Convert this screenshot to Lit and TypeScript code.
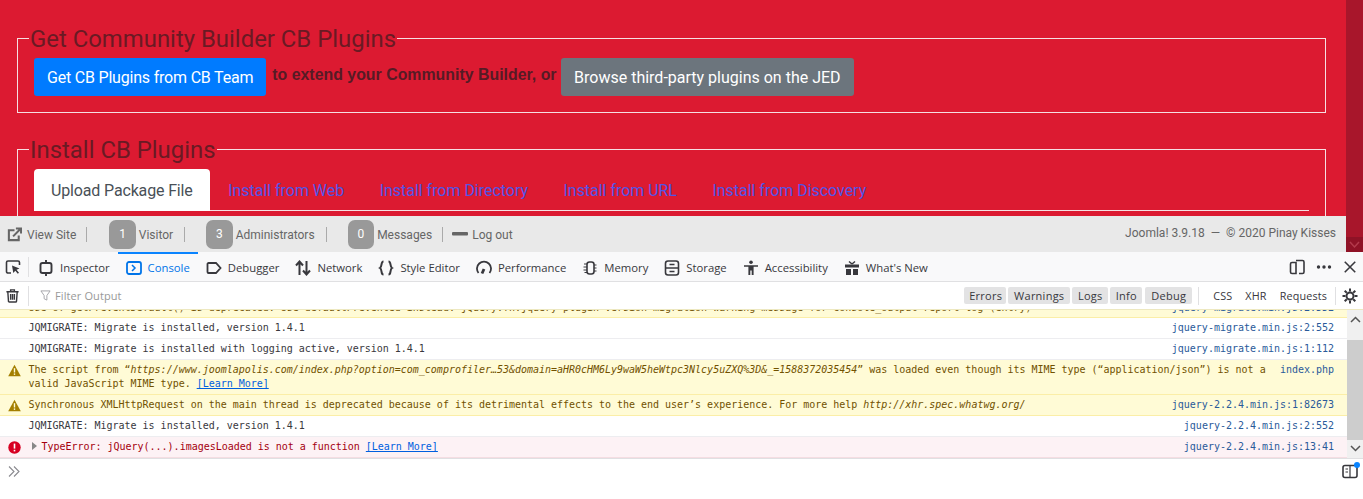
import { LitElement, html, css, svg } from "lit";
import { customElement } from "lit/decorators.js";

const ic = (body: unknown, size = 16, cls = "") =>
  html`<svg class=${cls} width=${size} height=${size} viewBox="0 0 16 16" fill="none" stroke="#38383d" stroke-width="1.6">${body}</svg>`;

const tabs = [
  { t: "Inspector", i: svg`<rect x="2.500" y="3" width="11" height="10" rx="2" stroke-width="1.900"/><path d="M8 0v3M8 13v3" stroke-width="1.900"/>` },
  { t: "Console", on: true, i: svg`<rect x="1" y="2" width="14" height="12" rx="2" stroke="#0074e8" stroke-width="1.800"/><path d="M6 5l3 3-3 3" stroke="#0074e8" stroke-width="1.500"/>` },
  { t: "Debugger", i: svg`<path d="M2.500 3h7.500l4.500 5-4.500 5H2.500a1 1 0 0 1-1-1V4a1 1 0 0 1 1-1z" stroke-width="1.800"/>` },
  { t: "Network", i: svg`<path d="M4.500 15V2M1 5.500L4.500 1.500 8 5.500M11.500 1v13M8 10.500l3.500 4 3.500-4" stroke-width="2"/>` },
  { t: "Style Editor", i: svg`<path d="M5.500 1.500c-3 0-1 5-3.500 6.500c2.500 1.500 0.500 6.500 3.500 6.500M10.500 1.500c3 0 1 5 3.500 6.500c-2.500 1.500-0.500 6.500-3.500 6.500" stroke-width="2"/>` },
  { t: "Performance", i: svg`<path d="M2.500 13a7 7 0 1 1 11 0" stroke-width="1.800"/><path d="M6 13.500l2-4.500" stroke-width="2.800"/>` },
  { t: "Memory", i: svg`<rect x="5" y="2" width="7" height="12" rx="2.500"/><path d="M5 4H2M5 7H1.500M5 10H1.500M5 12.500H2.500M12 5h2.500M12 8h2.500M12 11h2.500" stroke-width="1"/>` },
  { t: "Storage", i: svg`<rect x="1.500" y="1" width="13" height="14" rx="2.500"/><path d="M1.500 8h13M5.500 4.500h5M5.500 11.500h5" stroke-width="1.300"/>` },
  { t: "Accessibility", i: svg`<circle cx="8" cy="2.200" r="1.800" fill="#38383d" stroke="none"/><path d="M1 5.200h14v1.600h-4.400V15H8.700v-4.500H7.300V15H5.400V6.800H1z" fill="#38383d" stroke="none"/>` },
  { t: "What's New", i: svg`<path d="M1 4.500h14v3H1zM2 9h5v6H2zM9 9h5v6H9z" fill="#38383d" stroke="none"/><path d="M8 4L5 1.500M8 4l3-2.500" stroke-width="1.500"/>` },
];

const warnIcon = html`<svg class="licon" width="13" height="13" viewBox="0 0 13 13"><path d="M6.500 0.800L12.800 12.200H0.200z" fill="#a47f00"/><rect x="5.800" y="4.200" width="1.400" height="4.300" fill="#fffbd6"/><rect x="5.800" y="9.400" width="1.400" height="1.500" fill="#fffbd6"/></svg>`;
const errIcon = html`<svg class="licon" width="13" height="13" viewBox="0 0 13 13"><circle cx="6.500" cy="6.500" r="6.200" fill="#d70022"/><rect x="5.700" y="2.600" width="1.600" height="5" fill="#fff"/><rect x="5.700" y="8.800" width="1.600" height="1.600" fill="#fff"/></svg>`;

@customElement("app-root")
export class AppRoot extends LitElement {
  static styles = css`
    :host { display: block; width: 1363px; height: 499px; overflow: hidden; background: #fff; font-family: "Roboto", sans-serif; }
    .page { display: flex; height: 252px; }
    .main { flex: 1; min-width: 0; display: flex; flex-direction: column; }
    .red { height: 216px; overflow: hidden; background: #dc1a31; padding: 23px 20px 0 17px; box-sizing: border-box; color: #6a1a24; }
    fieldset { margin: 0 0 21px; border: 1px solid #f6dfe2; padding: 5px 16px 16px; min-width: 0; }
    legend { font-size: 23.900px; line-height: 28px; padding: 2px 1px 0; margin-left: -5px; }
    .cta { display: flex; align-items: center; gap: 5px; }
    .cta b { font: 900 15.900px/1 "Liberation Sans", sans-serif; margin: -4px 0 0 1px; color: #561b25; }
    .btn { height: 38px; display: flex; align-items: center; padding: 0 13px; border-radius: 3px; color: #fff; font-size: 16px; box-sizing: border-box; white-space: nowrap; }
    .blue { background: #007bff; letter-spacing: -.2px; }
    .grey { background: #6c757d; margin-left: -.500px; }
    .nav { display: flex; gap: 1.500px; border-bottom: 1px solid #f6dfe2; height: 41px; }
    .nav span { padding: 0 17px; height: 41px; line-height: 43px; font-size: 16px; color: #5255e6; white-space: nowrap; letter-spacing: -.03px; }
    .nav .act { background: #fff; color: #495057; border-radius: 4px 4px 0 0; height: 42px; letter-spacing: -.15px; }
    .bar { height: 36px; background: #e9e9e9; display: flex; align-items: center; color: #666; font-size: 12px; padding: 0 10px 0 7px; }
    .bar .it { display: flex; align-items: center; white-space: nowrap; }
    .tx { padding-top: 2px; }
    .sepb { width: 1px; height: 15px; background: #aaa; }
    .badge { width: 26.500px; height: 29px; border-radius: 7px; background: #999; color: #fff; display: flex; align-items: center; justify-content: center; margin-right: 3px; }
    .right { margin-left: auto; padding-bottom: 3px; }
    .sb { width: 17px; background: #a8162b; display: flex; flex-direction: column; justify-content: flex-end; }
    .sb div { height: 15px; background: #8f1226; display: flex; align-items: center; justify-content: center; }
    .tools { height: 30px; box-sizing: border-box; background: #f9f9fa; border-bottom: 1px solid #e0e0e2; display: flex; align-items: center; font: 11.300px "Open Sans", sans-serif; color: #38383d; }
    .tab { height: 29px; display: flex; align-items: center; gap: 6px; padding: 0 8px; box-sizing: border-box; border-top: 2px solid transparent; white-space: nowrap; }
    .tab.on { border-top-color: #0a84ff; color: #0074e8; }
    .tabs { display: flex; margin-left: 1px; }
    .pick { margin-left: 5px; margin-right: 7px; }
    .vsep { width: 1px; height: 20px; background: #e0e0e2; }
    .tr { margin-left: auto; display: flex; align-items: center; gap: 11px; padding-right: 6px; }
    .filter { height: 28px; box-sizing: border-box; display: flex; align-items: center; font: 11px "Open Sans", sans-serif; color: #38383d; border-bottom: 1px solid #ede8c0; letter-spacing: .25px; white-space: nowrap; }
    .ph { color: #999; margin-left: 4px; letter-spacing: .1px; }
    .chips { margin-left: auto; display: flex; gap: 2px; align-items: center; }
    .chip { height: 17px; line-height: 17px; padding: 0 5px; background: #e3e3e4; border-radius: 2px; box-sizing: border-box; text-align: center; }
    .links { display: flex; gap: 13px; margin: 0 8px 0 14px; font-size: 10.800px; letter-spacing: .15px; }
    .console { height: 148px; display: flex; font: 10px/14px "DejaVu Sans Mono", monospace; letter-spacing: -.015px; color: #38383d; }
    .rows { flex: 1; min-width: 0; }
    .row { display: flex; position: relative; box-sizing: border-box; padding: 3px 13px 0 28.500px; border-bottom: 1px solid #ededf0; gap: 5px; }
    .row .msg { flex: 1; min-width: 0; }
    .warn { background: #fffbd6; border-bottom-color: #fbeea7; color: #715100; }
    .err { background: #fdf2f5; border-bottom-color: #f5dde2; color: #a4000f; }
    .src { color: #2a5a9a; white-space: nowrap; text-decoration: none; }
    .licon { position: absolute; left: 7.500px; top: 4px; }
    a { color: #0060df; text-decoration: underline; }
    i { font-style: italic; }
    .tri { display: inline-block; width: 0; height: 0; border-left: 5px solid #888; border-top: 4px solid transparent; border-bottom: 4px solid transparent; margin: 0 5px 0 3px; }
    .cut { height: 8px; overflow: hidden; padding-top: 0; position: relative; }
    .cut .msg, .cut .src { margin-top: -9px; }
    .csb { width: 16px; background: #f0f0f0; display: flex; flex-direction: column; align-items: center; justify-content: space-between; padding: 6px 0; box-sizing: border-box; position: relative; }
    .thumb { position: absolute; left: 0; right: 0; top: 30px; height: 100px; background: #cdcdcd; }
    .input { height: 25px; display: flex; align-items: center; justify-content: space-between; padding: 0 5px 0 8px; border-top: 1px solid #e0e0e2; box-sizing: border-box; position: relative; }
    .dot { position: absolute; right: 3px; top: 3px; width: 6px; height: 6px; background: #0a84ff; border-radius: 50%; }
  `;

  render() {
    return html`
      <div class="page">
        <div class="main">
          <div class="red">
            <fieldset>
              <legend>Get Community Builder CB Plugins</legend>
              <div class="cta">
                <span class="btn blue">Get CB Plugins from CB Team</span>
                <b>to extend your Community Builder, or</b>
                <span class="btn grey">Browse third-party plugins on the JED</span>
              </div>
            </fieldset>
            <fieldset>
              <legend>Install CB Plugins</legend>
              <div class="nav">
                <span class="act">Upload Package File</span>
                <span>Install from Web</span>
                <span>Install from Directory</span>
                <span>Install from URL</span>
                <span>Install from Discovery</span>
              </div>
            </fieldset>
          </div>
          <div class="bar">
            <span class="it"><svg width="15" height="15" viewBox="0 0 16 16" fill="none" stroke="#666" stroke-width="2.200" style="margin-right:5px"><path d="M8 3.500H2v10.500h10.500V9"/><path d="M6.500 10L14 2.500M9.500 1.500H15V7"/></svg><span class="tx">View Site</span></span>
            <span class="sepb" style="margin:0 22px 0 10px"></span>
            <span class="it"><span class="badge">1</span><span class="tx">Visitor</span></span>
            <span class="sepb" style="margin:0 21px 0 11px"></span>
            <span class="it"><span class="badge">3</span><span class="tx">Administrators</span></span>
            <span class="sepb" style="margin:0 21px 0 11px"></span>
            <span class="it"><span class="badge">0</span><span class="tx">Messages</span></span>
            <span class="sepb" style="margin:0 9px 0 10px"></span>
            <span class="it"><svg width="16" height="6" viewBox="0 0 16 6" style="margin-right:4px"><rect y="1" width="16" height="3.500" rx="1" fill="#666"/></svg><span class="tx">Log out</span></span>
            <span class="it right">Joomla! 3.9.18 &nbsp;—&nbsp; © 2020 Pinay Kisses</span>
          </div>
        </div>
        <div class="sb"><div><svg width="11" height="8" viewBox="0 0 11 8" fill="none" stroke="#b33a4c" stroke-width="1.500"><path d="M1 1l4.500 5L10 1"/></svg></div></div>
      </div>

      <div class="tools">
        ${ic(svg`<path d="M6 14H3a1.500 1.500 0 0 1-1.500-1.500v-9A1.500 1.500 0 0 1 3 2h10a1.500 1.500 0 0 1 1.500 1.500V6"/><path d="M7 6.500l7.500 3-3 1.200 2.500 3-1.200 1-2.500-3-2 2.300z" fill="#38383d" stroke="none"/>`, 16, "pick")}
        <span class="vsep"></span>
        <div class="tabs">
          ${tabs.map((t) => html`<div class="tab ${t.on ? "on" : ""}">${ic(t.i, 16)}${t.t}</div>`)}
        </div>
        <div class="tr">
          ${ic(svg`<path d="M7 3.500H3a1.500 1.500 0 0 0-1.500 1.500v8A1.500 1.500 0 0 0 3 14.500h4zM7 1.500h6.500A1.500 1.500 0 0 1 15 3v10a1.500 1.500 0 0 1-1.500 1.500H10"/>`, 16)}
          ${ic(svg`<circle cx="2.500" cy="8" r="1.700" fill="#38383d" stroke="none"/><circle cx="8" cy="8" r="1.700" fill="#38383d" stroke="none"/><circle cx="13.500" cy="8" r="1.700" fill="#38383d" stroke="none"/>`, 16)}
          ${ic(svg`<path d="M2 2l12 12M14 2L2 14" stroke-width="1.800"/>`, 14)}
        </div>
      </div>

      <div class="filter">
        ${ic(svg`<path d="M1.500 4h13M6 4V2h4v2M3 4l.7 10a1 1 0 0 0 1 1h6.600a1 1 0 0 0 1-1L13 4M6 6.500v6M8 6.500v6M10 6.500v6" stroke-width="1.500"/>`, 15, "pick")}
        <span class="vsep" style="margin-left:1px;margin-right:11px"></span>
        <svg width="11" height="11" viewBox="0 0 12 12" fill="none" stroke="#a0a0a5"><path d="M1 1h10L7.500 6v5l-3-1.500V6z"/></svg>
        <span class="ph">Filter Output</span>
        <div class="chips">
          <span class="chip" style="width:42px">Errors</span>
          <span class="chip" style="width:62px">Warnings</span>
          <span class="chip" style="width:36px">Logs</span>
          <span class="chip" style="width:32px">Info</span>
          <span class="chip" style="width:47px;margin-left:1px">Debug</span>
        </div>
        <span class="vsep" style="margin-left:6px;height:18px"></span>
        <div class="links"><span>CSS</span><span>XHR</span><span>Requests</span></div>
        <span class="vsep" style="height:18px"></span>
        <svg width="16" height="16" viewBox="0 0 16 16" style="margin:0 5px 0 6px" fill="none" stroke="#38383d"><circle cx="8" cy="8" r="3.500" stroke-width="2"/><path d="M8 0.500v3M8 12.500v3M0.500 8h3M12.500 8h3M2.700 2.700l2.100 2.100M11.200 11.200l2.100 2.100M13.300 2.700l-2.100 2.100M4.800 11.200l-2.100 2.100" stroke-width="2"/></svg>
      </div>

      <div class="console">
        <div class="rows">
          <div class="row warn cut"><div class="msg">Use of getPreventDefault() is deprecated. Use defaultPrevented instead. jQuery.fn.jquery plugin version migration warning message for console_output report log (entry)</div><a class="src">jquery-migrate.min.js:2:552</a></div>
          <div class="row" style="height:21px"><div class="msg">JQMIGRATE: Migrate is installed, version 1.4.1</div><a class="src">jquery-migrate.min.js:2:552</a></div>
          <div class="row" style="height:21px"><div class="msg">JQMIGRATE: Migrate is installed with logging active, version 1.4.1</div><a class="src">jquery.migrate.min.js:1:112</a></div>
          <div class="row warn" style="height:35px">${warnIcon}<div class="msg">The script from “<i>https://www.joomlapolis.com/index.php?option=com_comprofiler…53&amp;domain=aHR0cHM6Ly9waW5heWtpc3Nlcy5uZXQ%3D&amp;_=1588372035454</i>” was loaded even though its MIME type (“application/json”) is not a valid JavaScript MIME type. <a>[Learn More]</a></div><a class="src">index.php</a></div>
          <div class="row warn" style="height:21px">${warnIcon}<div class="msg">Synchronous XMLHttpRequest on the main thread is deprecated because of its detrimental effects to the end user’s experience. For more help <i>http://xhr.spec.whatwg.org/</i></div><a class="src">jquery-2.2.4.min.js:1:82673</a></div>
          <div class="row" style="height:21px"><div class="msg">JQMIGRATE: Migrate is installed, version 1.4.1</div><a class="src">jquery-2.2.4.min.js:2:552</a></div>
          <div class="row err" style="height:21px">${errIcon}<div class="msg"><span class="tri"></span>TypeError: jQuery(...).imagesLoaded is not a function <a>[Learn More]</a></div><a class="src">jquery-2.2.4.min.js:13:41</a></div>
        </div>
        <div class="csb">
          <span class="thumb"></span>
          <svg width="11" height="7" viewBox="0 0 11 7" fill="none" stroke="#555" stroke-width="1.500"><path d="M1 6l4.500-4.500L10 6"/></svg>
          <svg width="11" height="7" viewBox="0 0 11 7" fill="none" stroke="#555" stroke-width="1.500"><path d="M1 1l4.500 4.500L10 1"/></svg>
        </div>
      </div>

      <div class="input">
        <svg width="13" height="13" viewBox="0 0 13 13" fill="none" stroke="#8a8a8f" stroke-width="1.100"><path d="M1 1.500l5 5-5 5M6 1.500l5 5-5 5"/></svg>
        ${ic(svg`<rect x="1" y="2.500" width="14" height="12" rx="2"/><path d="M8 2.500v12M3.500 6h2.500M3.500 9h2.500" stroke-width="1.200"/>`, 16)}
        <span class="dot"></span>
      </div>
    `;
  }
}
